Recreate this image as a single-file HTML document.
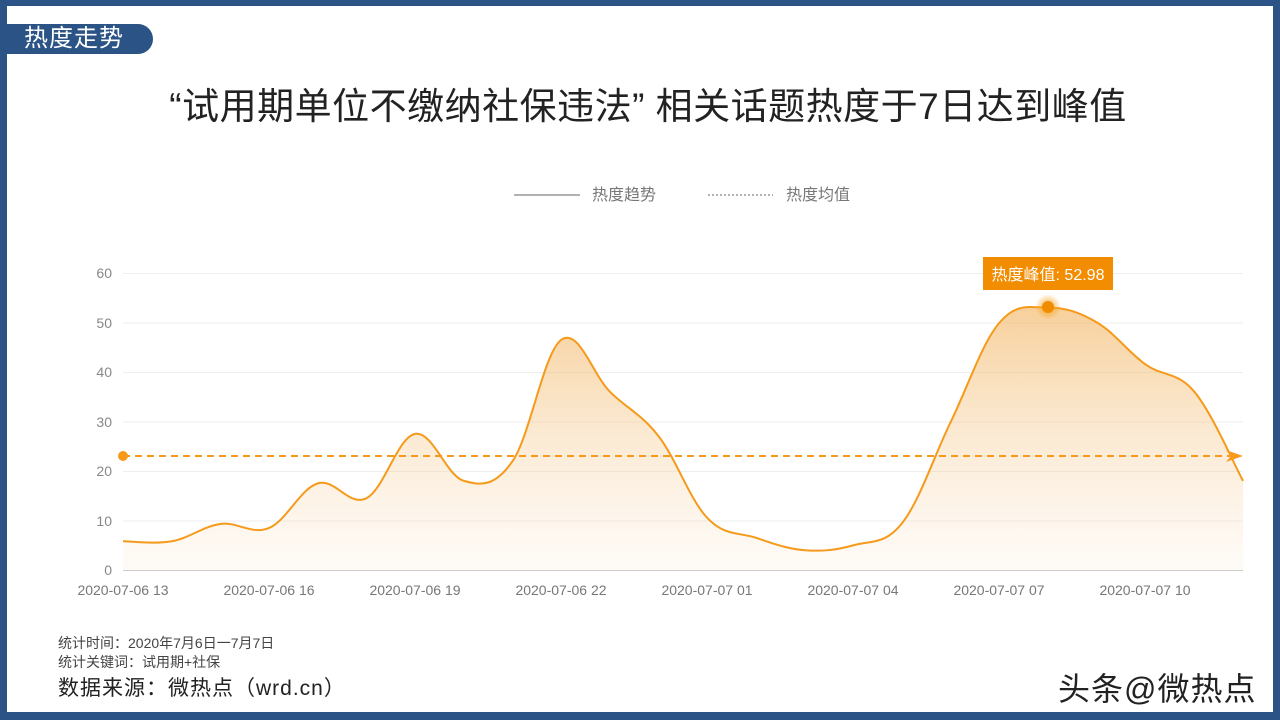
<!DOCTYPE html>
<html><head><meta charset="utf-8"><style>
body{margin:0;width:1280px;height:720px;overflow:hidden;background:#fff;font-family:"Liberation Sans","Noto Sans CJK SC",sans-serif;}
.frame{position:absolute;left:0;top:0;width:1280px;height:720px;box-sizing:border-box;border-style:solid;border-color:#2c5386;border-width:6px 7px 8px 7px;}
.tag{position:absolute;left:7px;top:24px;width:146px;height:30px;background:#2c5386;border-radius:0 15px 15px 0;color:#fff;font-size:24px;line-height:30px;padding-left:17px;box-sizing:border-box;letter-spacing:1px}
.title{position:absolute;left:0;width:1296px;top:76px;text-align:center;font-size:37px;color:#222;letter-spacing:0.5px}
.t{position:absolute;color:#333;}
</style></head><body>
<div class="frame"></div>
<div class="tag">热度走势</div>
<div class="title">“试用期单位不缴纳社保违法” 相关话题热度于7日达到峰值</div>
<svg width="1280" height="720" style="position:absolute;left:0;top:0">
<defs><linearGradient id="g" gradientUnits="userSpaceOnUse" x1="0" y1="300" x2="0" y2="570"><stop offset="0" stop-color="#f2b460" stop-opacity="0.65"/><stop offset="1" stop-color="#f8d8b0" stop-opacity="0.1"/></linearGradient>
<radialGradient id="glow"><stop offset="0.4" stop-color="#f5a623" stop-opacity="0.6"/><stop offset="1" stop-color="#f5a623" stop-opacity="0"/></radialGradient></defs>
<line x1="514" y1="195" x2="580" y2="195" stroke="#666" stroke-width="1"/>
<text x="592" y="200" font-size="16" fill="#777" font-family="Liberation Sans,Noto Sans CJK SC,sans-serif">热度趋势</text>
<line x1="708" y1="195" x2="773" y2="195" stroke="#666" stroke-width="1" stroke-dasharray="2,2"/>
<text x="786" y="200" font-size="16" fill="#777" font-family="Liberation Sans,Noto Sans CJK SC,sans-serif">热度均值</text>
<g stroke="#eee" stroke-width="1">
<line x1="123" y1="273.5" x2="1243" y2="273.5"/><line x1="123" y1="323" x2="1243" y2="323"/><line x1="123" y1="372.5" x2="1243" y2="372.5"/><line x1="123" y1="422" x2="1243" y2="422"/><line x1="123" y1="471.5" x2="1243" y2="471.5"/><line x1="123" y1="521" x2="1243" y2="521"/></g>
<line x1="123" y1="570.5" x2="1243" y2="570.5" stroke="#ccc"/>
<g font-size="14" fill="#888" text-anchor="end" font-family="Liberation Sans,sans-serif">
<text x="112" y="278">60</text><text x="112" y="328">50</text><text x="112" y="377">40</text><text x="112" y="427">30</text><text x="112" y="476">20</text><text x="112" y="526">10</text><text x="112" y="575">0</text></g>
<g font-size="14" fill="#777" text-anchor="middle" font-family="Liberation Sans,sans-serif">
<text x="123" y="595">2020-07-06 13</text><text x="269" y="595">2020-07-06 16</text><text x="415" y="595">2020-07-06 19</text><text x="561" y="595">2020-07-06 22</text><text x="707" y="595">2020-07-07 01</text><text x="853" y="595">2020-07-07 04</text><text x="999" y="595">2020-07-07 07</text><text x="1145" y="595">2020-07-07 10</text></g>
<path id="area" fill="url(#g)" d=""/>
<path id="line" fill="none" stroke="#f59a1b" stroke-width="2" d=""/>
<line x1="123" y1="456" x2="1236" y2="456" stroke="#f59a1b" stroke-width="2" stroke-dasharray="7,5"/>
<circle cx="123" cy="456" r="5" fill="#f59a1b"/>
<path d="M1226 450 L1243 456 L1226 462 L1231 456Z" fill="#f59a1b"/>
<circle cx="1048" cy="307" r="13" fill="url(#glow)"/>
<circle cx="1048" cy="307" r="6" fill="#f08c00"/>
<rect x="983" y="257" width="130" height="33" fill="#f28c00"/>
<text x="1048" y="280" font-size="16" fill="#fff" text-anchor="middle" font-family="Liberation Sans,Noto Sans CJK SC,sans-serif">热度峰值: 52.98</text>
</svg>
<div class="t" style="left:58px;top:633px;font-size:14px;color:#444">统计时间：2020年7月6日一7月7日</div>
<div class="t" style="left:58px;top:652px;font-size:14px;color:#444">统计关键词：试用期+社保</div>
<div class="t" style="left:58px;top:672px;font-size:21px;color:#222;letter-spacing:1px">数据来源：微热点（wrd.cn）</div>
<div class="t" style="left:1058px;top:664px;font-size:32px;color:#222;letter-spacing:1px">头条@微热点</div>
<script>
var ys=[5.8,5.8,9.3,8.5,17.5,14.5,27.5,18,22,46.5,36,27,10.5,6.5,4,5,9.5,30,50,53,50,41.5,36,18];
var p=ys.map(function(v,i){return [123+i*48.7,570-v*4.95];});
var d="M"+p[0][0]+" "+p[0][1];
for(var i=0;i<p.length-1;i++){var a=p[i-1]||p[i],b=p[i],c=p[i+1],e=p[i+2]||c;var t=0.18;
d+=" C"+(b[0]+(c[0]-a[0])*t)+" "+(b[1]+(c[1]-a[1])*t)+" "+(c[0]-(e[0]-b[0])*t)+" "+(c[1]-(e[1]-b[1])*t)+" "+c[0]+" "+c[1];}
document.getElementById("line").setAttribute("d",d);
document.getElementById("area").setAttribute("d",d+" L1243 570 L123 570Z");
</script>
</body></html>
